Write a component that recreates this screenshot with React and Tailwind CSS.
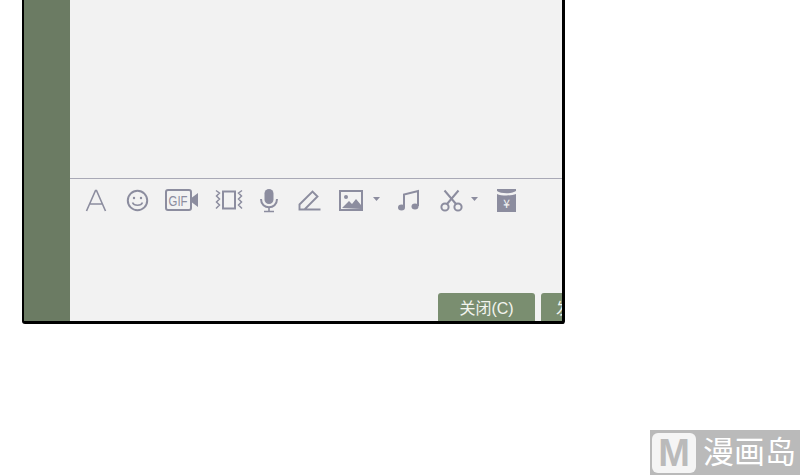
import { Fragment } from 'react'

const ICON = '#8c8d9f'

const TOOLS = [
  {
    key: 'font',
    w: 22,
    gap: 19,
    icon: (
      <svg width="22" height="24" viewBox="0 0 22 24" fill="none" stroke={ICON} strokeWidth="1.6">
        <path d="M1.5 23 10.5 2.5h1L20.5 23M5 16h12.5" />
      </svg>
    ),
  },
  {
    key: 'emoji',
    w: 23,
    gap: 16,
    icon: (
      <svg width="23" height="23" viewBox="0 0 23 23" fill="none" stroke={ICON} strokeWidth="2">
        <circle cx="11.5" cy="11.5" r="9.7" />
        <circle cx="8" cy="9" r="1.2" fill={ICON} stroke="none" />
        <circle cx="15" cy="9" r="1.2" fill={ICON} stroke="none" />
        <path d="M6.5 13.5c1.5 3.6 8.5 3.6 10 0" strokeWidth="1.6" />
      </svg>
    ),
  },
  {
    key: 'gif',
    w: 34,
    gap: 15,
    icon: (
      <svg width="34" height="22" viewBox="0 0 34 22" fill="none">
        <rect x="1" y="1" width="25" height="20" rx="2" stroke={ICON} strokeWidth="2" />
        <path d="M27 8.5 33 4v14l-6-4.5z" fill={ICON} />
        <text x="3.6" y="16.5" fontSize="14" fill={ICON} fontFamily="'Liberation Sans', sans-serif" textLength="19" lengthAdjust="spacingAndGlyphs">GIF</text>
      </svg>
    ),
  },
  {
    key: 'shake',
    w: 30,
    gap: 16,
    icon: (
      <svg width="30" height="22" viewBox="0 0 30 22" fill="none" stroke={ICON}>
        <rect x="9" y="2.5" width="12" height="17" strokeWidth="2" />
        <path d="M2 1.5 5.5 4 2.5 7 5.5 10 2.5 13 5.5 16 2 19.5M28 1.5 24.5 4 27.5 7 24.5 10 27.5 13 24.5 16 28 19.5" strokeWidth="1.5" />
      </svg>
    ),
  },
  {
    key: 'mic',
    w: 18,
    gap: 20,
    icon: (
      <svg width="18" height="25" viewBox="0 0 18 25" fill="none" stroke={ICON}>
        <rect x="4.5" y="1" width="9" height="15" rx="4.5" fill={ICON} stroke="none" />
        <path d="M1 11c0 11 16 11 16 0" strokeWidth="2" />
        <path d="M9 19v4.5M4 23.5h10" strokeWidth="1.6" />
      </svg>
    ),
  },
  {
    key: 'pen',
    w: 23,
    gap: 18,
    icon: (
      <svg width="23" height="22" viewBox="0 0 23 22" fill="none" stroke={ICON} strokeWidth="1.9">
        <path d="M1.5 20.5v-5L14.5 2.5l5 5-13 13zM22.5 20.5h-16" />
      </svg>
    ),
  },
  {
    key: 'image',
    w: 24,
    gap: 17,
    caret: 10,
    icon: (
      <svg width="24" height="21" viewBox="0 0 24 21" fill="none">
        <rect x="1" y="1" width="22" height="19" stroke={ICON} strokeWidth="2" />
        <circle cx="7" cy="7" r="2" fill={ICON} />
        <path d="M3 18 10 11l3 3 4-5 5 6v4z" fill={ICON} />
      </svg>
    ),
  },
  {
    key: 'music',
    w: 23,
    gap: 20,
    icon: (
      <svg width="23" height="23" viewBox="0 0 23 23" fill="none">
        <path d="M7 18V5.5L21 2v15" stroke={ICON} strokeWidth="2" />
        <ellipse cx="4.5" cy="18.5" rx="3.5" ry="3" fill={ICON} />
        <ellipse cx="18" cy="17.5" rx="3.5" ry="3" fill={ICON} />
      </svg>
    ),
  },
  {
    key: 'cut',
    w: 23,
    gap: 18,
    caret: 8,
    icon: (
      <svg width="23" height="23" viewBox="0 0 23 23" fill="none" stroke={ICON} strokeWidth="2">
        <circle cx="5" cy="18" r="3.6" />
        <circle cx="18" cy="18" r="3.6" />
        <path d="M7 15 18.5 1.5M16 15 4.5 1.5" />
      </svg>
    ),
  },
  {
    key: 'packet',
    w: 21,
    gap: 0,
    icon: (
      <svg width="21" height="25" viewBox="0 0 21 25">
        <path d="M1 1h19v2c-4 3-15 3-19 0z" fill={ICON} />
        <path d="M1 6c4 2 15 2 19 0v18H1z" fill={ICON} />
        <text x="10.5" y="20" textAnchor="middle" fontSize="12" fill="#f2f2f2" fontFamily="'Noto Sans CJK SC', sans-serif">¥</text>
      </svg>
    ),
  },
]

export default function App() {
  return (
    <div className="relative w-[800px] h-[475px] overflow-hidden bg-white font-['Liberation_Sans','Noto_Sans_CJK_SC',sans-serif]">
      {/* 聊天窗口,顶部被裁掉 */}
      <div className="ml-[22px] flex h-[324px] w-[543px] overflow-hidden rounded-b-[3px] border-b-[3px] border-l-[2px] border-r-[3px] border-black">
        <div className="w-[46px] shrink-0 bg-[#6b7b63]" />
        <div className="flex min-w-0 flex-1 flex-col bg-[#f2f2f2]">
          <div className="h-[179px] shrink-0 border-b border-[#a9a9b6]" />
          <div className="flex h-[42px] shrink-0 items-center pl-[15px]">
            {TOOLS.map((t) => (
              <Fragment key={t.key}>
                <div className="flex shrink-0 items-center justify-center" style={{ width: t.w, marginRight: t.caret ? 0 : t.gap }}>
                  {t.icon}
                </div>
                {t.caret && (
                  <div className="flex items-center" style={{ marginLeft: t.caret, marginRight: t.gap }}>
                    <svg width="7" height="4" viewBox="0 0 7 4" className="mb-[3px]">
                      <path d="M0 0h7L3.5 4z" fill={ICON} />
                    </svg>
                  </div>
                )}
              </Fragment>
            ))}
          </div>
          <div className="flex-1" />
          <div className="flex h-[28px] shrink-0 gap-[6px] overflow-hidden pl-[368px]">
            <button className="h-[32px] w-[97px] shrink-0 rounded-[3px] bg-[#7a8e70] text-[16px] text-[#f2f4ee]">关闭(C)</button>
            <button className="h-[32px] w-[97px] shrink-0 rounded-[3px] bg-[#7a8e70] pl-[15px] text-left text-[16px] text-[#f2f4ee]">发</button>
          </div>
        </div>
      </div>

      {/* 水印 */}
      <div className="absolute bottom-0 right-0 flex h-[45px] w-[150px] items-center gap-[7px] bg-[#bababa] pl-[2px] text-white">
        <div className="flex h-[40px] w-[44px] items-center justify-center rounded-[6px] bg-white/85 text-[38px] font-bold leading-none text-[#bababa]">M</div>
        <span className="whitespace-nowrap text-[31px] leading-none">漫画岛</span>
      </div>
    </div>
  )
}
